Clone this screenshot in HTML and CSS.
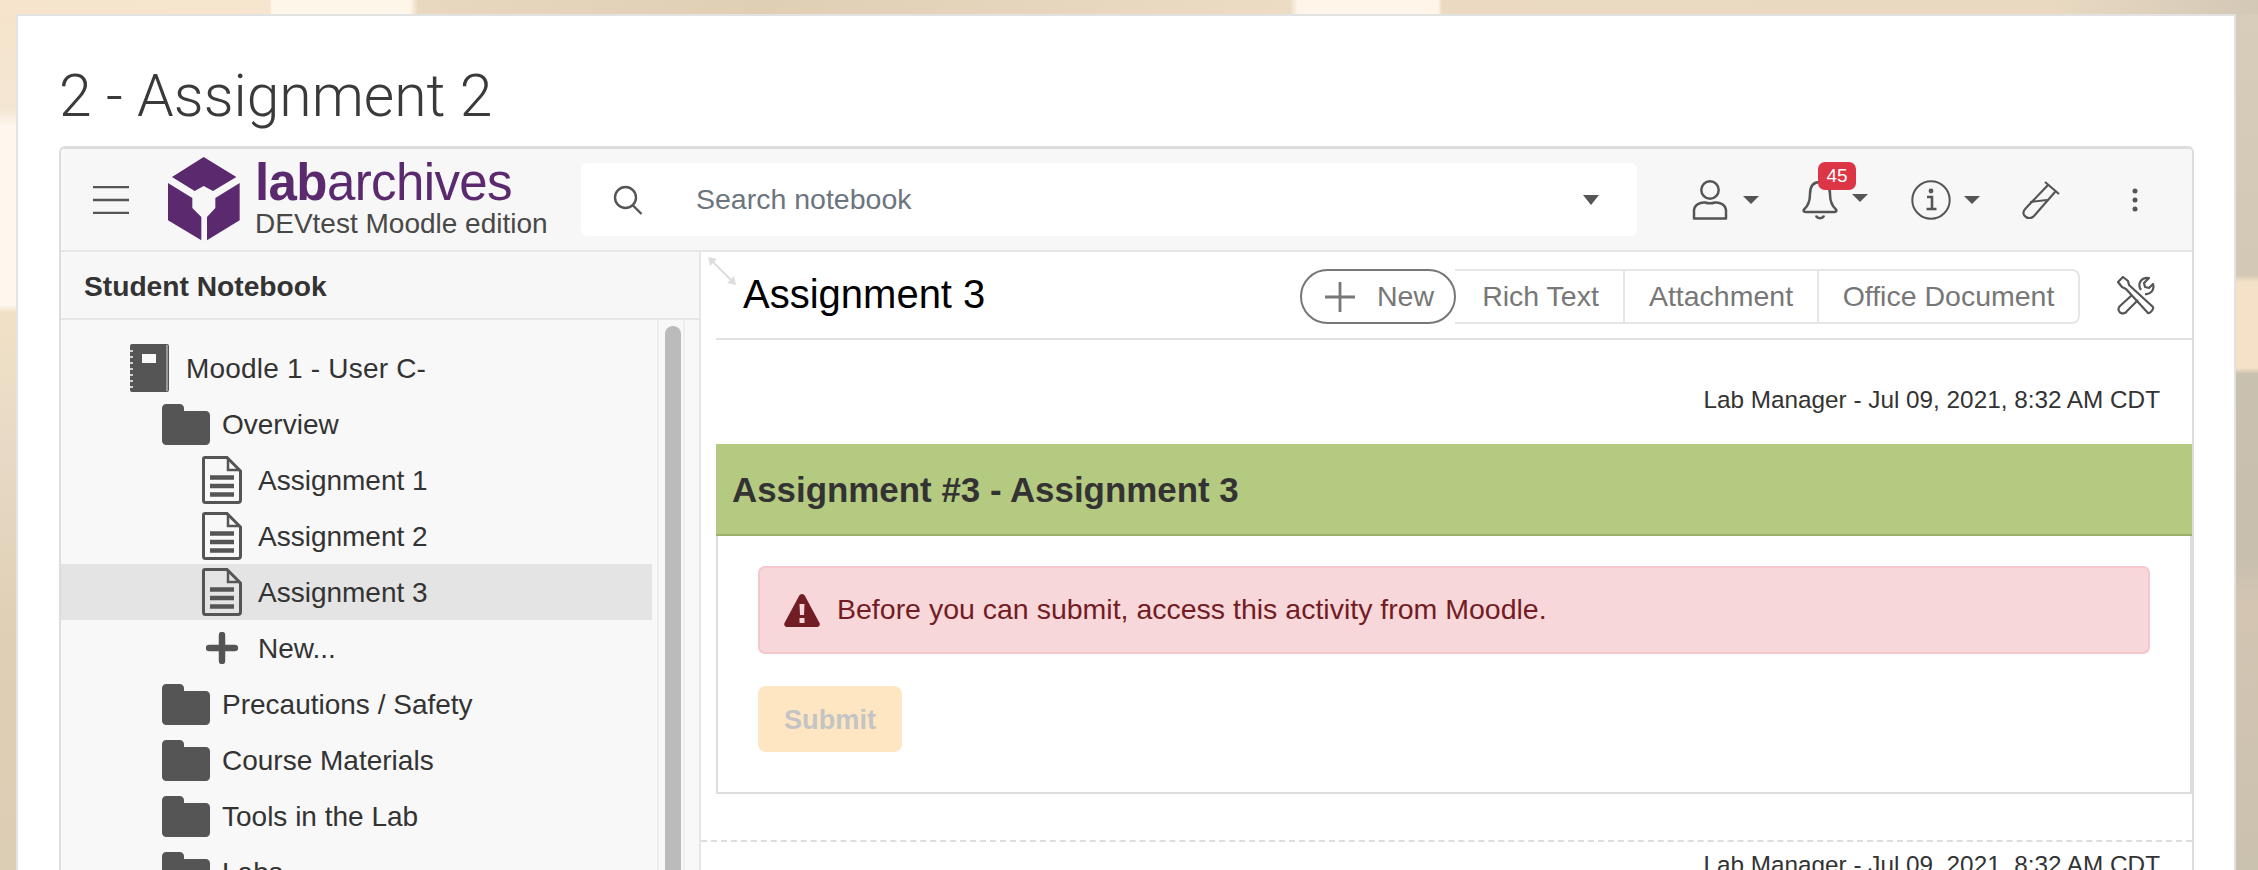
FILE: index.html
```html
<!DOCTYPE html>
<html lang="en">
<head>
<meta charset="utf-8">
<title>2 - Assignment 2</title>
<link rel="stylesheet" href="styles.css">
</head>
<body>
<div class="page">
  <div class="card">
    <h1 class="page-title">2 - Assignment 2</h1>
    <div class="app">
      <header class="topbar">
        <svg class="burger" width="36" height="28" viewBox="0 0 36 28"><path d="M0 1h36M0 14h36M0 27h36" stroke="#555" stroke-width="2.4" fill="none"/></svg>
        <svg class="cube" width="72" height="84" viewBox="55 25 216 252"><path fill="#5b2a6e" d="M162 25L260 85 190 127 162 112 135 127 67 85Z"/><path fill="#5b2a6e" d="M55 103L128 148V178L155 205V275L55 215Z"/><path fill="#5b2a6e" d="M270 103L197 148V178L172 205V275L270 215Z"/></svg>
        <div class="brand">
          <div class="brand-name"><b>lab</b>archives</div>
          <div class="brand-sub">DEVtest Moodle edition</div>
        </div>
        <div class="search">
          <svg class="search-icon" width="30" height="30" viewBox="0 0 30 30"><circle cx="12.5" cy="12.5" r="10.5" fill="none" stroke="#555" stroke-width="2.4"/><path d="M20 20.500L28.500 29" stroke="#555" stroke-width="2.4" fill="none"/></svg>
          <span class="search-text">Search notebook</span>
          <span class="caret caret-search"></span>
        </div>
        <div class="tools">
          <svg class="i-user" width="36" height="40" viewBox="0 0 36 40"><circle cx="18" cy="10" r="8.700" fill="none" stroke="#555" stroke-width="2.500"/><path d="M2 38.500V31C2 25 8 22 13 22.500C16 23.500 20 23.500 23 22.500C28 22 34 25 34 31V38.500Z" fill="none" stroke="#555" stroke-width="2.500" stroke-linejoin="round"/></svg>
          <span class="caret caret-user"></span>
          <div class="bell">
            <svg width="36" height="40" viewBox="0 0 36 40"><path d="M18 2C10 2 8 8 8 14C8 22 6 26 2 29.500C1 31 2 32 4 32H32C34 32 35 31 34 29.500C30 26 28 22 28 14C28 8 26 2 18 2Z" fill="none" stroke="#555" stroke-width="2.500" stroke-linejoin="round"/><path d="M14 35.500C15 39 21 39 22 35.500" fill="none" stroke="#555" stroke-width="2.500"/></svg>
            <span class="badge">45</span>
          </div>
          <span class="caret caret-bell"></span>
          <svg class="i-info" width="40" height="40" viewBox="0 0 40 40"><circle cx="20" cy="20" r="18.700" fill="none" stroke="#555" stroke-width="2"/><circle cx="20" cy="11" r="2.400" fill="#555"/><path d="M16 17H21V28.500M15.500 29H25.500" fill="none" stroke="#555" stroke-width="2.600"/></svg>
          <span class="caret caret-info"></span>
          <svg class="i-tube" width="38" height="38" viewBox="0 0 38 38"><path d="M23 1L37 13M26 4L4 27C0 31 1 34 4 36C7 38 10 37 12 35L33 11M8 21L25 19" fill="none" stroke="#555" stroke-width="2.200" stroke-linejoin="round"/></svg>
          <svg class="i-more" width="6" height="24" viewBox="0 0 6 24"><circle cx="3" cy="3" r="2.500" fill="#555"/><circle cx="3" cy="12" r="2.500" fill="#555"/><circle cx="3" cy="21" r="2.500" fill="#555"/></svg>
        </div>
      </header>
      <div class="workspace">
        <aside class="sidebar">
          <div class="side-head">Student Notebook</div>
          <div class="side-body">
            <ul class="tree">
              <li class="row lvl-book"><svg width="40" height="48" viewBox="0 0 40 48"><rect x="1" y="0" width="39" height="48" rx="2" fill="#555"/><path d="M38 1V47" stroke="#ddd" stroke-width="1"/><rect x="13" y="10" width="14" height="9" fill="#f8f8f8"/><path d="M0 7h4M0 13h4M0 19h4M0 25h4M0 31h4M0 37h4M0 43h4" stroke="#f8f8f8" stroke-width="1.500"/></svg><span>Moodle 1 - User C-</span></li>
              <li class="row lvl-folder"><svg class="folder" viewBox="0 0 48 41"><use href="#folder"/></svg><span>Overview</span></li>
              <li class="row lvl-page"><svg class="doc" viewBox="0 0 40 48"><use href="#doc"/></svg><span>Assignment 1</span></li>
              <li class="row lvl-page"><svg class="doc" viewBox="0 0 40 48"><use href="#doc"/></svg><span>Assignment 2</span></li>
              <li class="row lvl-page selected"><svg class="doc" viewBox="0 0 40 48"><use href="#doc"/></svg><span>Assignment 3</span></li>
              <li class="row lvl-new"><svg width="32" height="32" viewBox="0 0 32 32"><path d="M16 3V29M3 16H29" stroke="#555" stroke-width="6.500" stroke-linecap="round"/></svg><span>New...</span></li>
              <li class="row lvl-folder"><svg class="folder" viewBox="0 0 48 41"><use href="#folder"/></svg><span>Precautions / Safety</span></li>
              <li class="row lvl-folder"><svg class="folder" viewBox="0 0 48 41"><use href="#folder"/></svg><span>Course Materials</span></li>
              <li class="row lvl-folder"><svg class="folder" viewBox="0 0 48 41"><use href="#folder"/></svg><span>Tools in the Lab</span></li>
              <li class="row lvl-folder"><svg class="folder" viewBox="0 0 48 41"><use href="#folder"/></svg><span>Labs</span></li>
            </ul>
            <div class="track"><div class="thumb"></div></div>
          </div>
        </aside>
        <main class="main">
          <svg class="resize" width="28" height="28" viewBox="0 0 28 28"><path d="M3 3L25 25" stroke="#ddd" stroke-width="2"/><path d="M0 0L9 2 2 9ZM28 28L19 26 26 19Z" fill="#ddd"/></svg>
          <div class="toolbar">
            <h2 class="entry-title">Assignment 3</h2>
            <div class="btn-group">
              <div class="btn-new"><svg width="30" height="30" viewBox="0 0 30 30"><path d="M15 0V30M0 15H30" stroke="#777" stroke-width="2.800"/></svg><span>New</span></div>
              <div class="btn-list">
                <div class="btn btn-rich">Rich Text</div>
                <div class="btn btn-att">Attachment</div>
                <div class="btn btn-office">Office Document</div>
              </div>
            </div>
            <svg class="i-wrench" width="38" height="39" viewBox="0 0 38 39"><g fill="none" stroke="#555" stroke-width="2.200" stroke-linejoin="round"><path d="M1 6L6 1 11 5 12 9 36 31C37 33 33 38 31 37L9 13 5 11Z"/><path d="M15 19L3 30C0 33 2 36 4 37C6 38 9 37 10 35L21 24"/><path d="M24 14C20 8 24 1 32 2L27 7 28 11 32 12 36 8C38 14 33 19 28 18"/></g></svg>
          </div>
          <section class="entry">
            <p class="meta">Lab Manager - Jul 09, 2021, 8:32 AM CDT</p>
            <h3 class="banner">Assignment #3 - Assignment 3</h3>
            <div class="panel">
              <div class="alert">
                <svg width="36" height="33" viewBox="0 0 36 33"><path fill="#721c24" fill-rule="evenodd" d="M18 0C19.500 0 20.500 1 21 2L35.500 29C36.500 31 35 33 33 33H3C1 33 -.500 31 .500 29L15 2C15.500 1 16.500 0 18 0ZM15.500 10L16 21H20L20.500 10ZM15.500 24V29H20.500V24Z"/></svg>
                <span>Before you can submit, access this activity from Moodle.</span>
              </div>
              <button class="submit" type="button">Submit</button>
            </div>
          </section>
          <section class="entry-next">
            <p class="meta">Lab Manager - Jul 09, 2021, 8:32 AM CDT</p>
          </section>
        </main>
      </div>
    </div>
  </div>
</div>
<svg class="defs" width="0" height="0">
  <symbol id="folder" viewBox="0 0 48 41"><path fill="#555" d="M4 0H18C20 0 22 2 22 4V7H44C46 7 48 9 48 11V37C48 39 46 41 44 41H4C2 41 0 39 0 37V4C0 2 2 0 4 0Z"/></symbol>
  <symbol id="doc" viewBox="0 0 40 48"><path d="M3 1.500H25L38.500 15V44C38.500 45.500 37.500 46.500 36 46.500H3C2 46.500 1.500 45.500 1.500 44V3C1.500 2 2 1.500 3 1.500Z" fill="none" stroke="#555" stroke-width="3"/><path d="M26 2V14H38" fill="none" stroke="#555" stroke-width="2.500"/><path d="M8 21.500H32M8 30H32M8 38.500H32" stroke="#555" stroke-width="4.500"/></symbol>
</svg>
</body>
</html>
```

FILE: styles.css
```css
* { box-sizing: border-box; }
html, body { margin: 0; padding: 0; height: 870px; overflow: hidden; }
body {
  font-family: "Liberation Sans", Arial, sans-serif;
  color: #333;
  background-color: #e6d5bb;
  background-image:
    linear-gradient(90deg, #f6e5cc 0, #f7e6cf 270px, #fff6ea 272px, #fff6ea 410px, #e8d8bf 418px, #dfcfb5 760px, #ecdcc4 1290px, #fff6e9 1298px, #fff6e9 1438px, #ebdac1 1442px, #e9d9c1 2050px, #d3c8b6 2258px),
    linear-gradient(180deg, #f6e4ca 0, #f3e6d3 110px, #fff8ef 126px, #fff8ef 305px, #f0e1c6 312px, #e8d9c6 450px, #dfcfb4 640px, #dccdb5 870px),
    linear-gradient(180deg, #d8ccba 0, #d3c8b6 275px, #f4e1c8 282px, #f4e1c8 368px, #c9c1b0 374px, #c8bfae 560px, #d3c5b2 600px, #cbc1af 870px);
  background-size: 100% 14px, 16px 100%, 22px 100%;
  background-position: 0 0, 0 0, 100% 0;
  background-repeat: no-repeat;
}
.defs { position: absolute; }
.page { padding: 14px 22px 0 16px; }
.card {
  background: #fff;
  border: 2px solid #e2e2e2;
  border-bottom: 0;
  padding: 0 40px 0 41px;
  height: 860px;
  overflow: hidden;
}
.page-title {
  margin: 0;
  height: 130px;
  padding-top: 42px;
  font-family: Roboto, sans-serif;
  font-weight: 300;
  font-size: 58.8px;
  line-height: 76px;
  color: #3a3a3a;
}
.app {
  border: 2px solid #ddd;
  border-top-width: 3px;
  border-radius: 6px 6px 0 0;
  height: 730px;
  overflow: hidden;
}
.topbar {
  display: flex;
  align-items: center;
  height: 103px;
  padding-left: 32px;
  background: #f7f7f7;
  border-bottom: 2px solid #e6e6e6;
}
.burger { flex: none; }
.cube { flex: none; margin-left: 39px; margin-top: -1px; }
.brand { flex: none; width: 326px; margin-left: 15px; color: #5b2a6e; }
.brand-name { font-size: 51px; line-height: 50px; letter-spacing: -.6px; margin-top: -2px; }
.brand-sub { font-size: 28px; line-height: 31px; color: #484848; }
.search {
  flex: none;
  display: flex;
  align-items: center;
  width: 1056px;
  height: 73px;
  padding-left: 32px;
  background: #fff;
  border-radius: 6px;
}
.search-text { margin-left: 53px; font-size: 28.5px; color: #6c757d; flex: 1; }
.caret {
  width: 0;
  height: 0;
  border-left: 8px solid transparent;
  border-right: 8px solid transparent;
  border-top: 8px solid #555;
  flex: none;
}
.caret-search { margin-right: 38px; border-top-width: 10px; }
.tools { flex: 1; display: flex; align-items: center; margin-left: 55px; height: 60px; }
.caret-user { margin-left: 15px; }
.bell { position: relative; margin-left: 43px; height: 40px; }
.badge {
  position: absolute;
  left: 16px;
  top: -18px;
  width: 38px;
  height: 28px;
  border-radius: 7px;
  background: #dc3545;
  color: #fff;
  font-size: 19px;
  line-height: 28px;
  text-align: center;
}
.caret-bell { margin-left: 14px; margin-top: -4px; }
.i-info { margin-left: 43px; }
.caret-info { margin-left: 13px; }
.i-tube { margin-left: 42px; }
.i-more { margin-left: 72px; }
.workspace { display: flex; height: 625px; }
.sidebar {
  flex: none;
  width: 640px;
  background: #f8f8f8;
  border-right: 2px solid #e6e6e6;
  display: flex;
  flex-direction: column;
}
.side-head {
  height: 68px;
  padding-left: 23px;
  border-bottom: 2px solid #e6e6e6;
  background: #f7f7f7;
  font-weight: 700;
  font-size: 28.2px;
  line-height: 68px;
}
.side-body { display: flex; flex: 1; min-height: 0; }
.tree { list-style: none; margin: 0; padding: 20px 0 0; width: 591px; flex: none; }
.row { display: flex; align-items: center; height: 56px; font-size: 28px; color: #333; }
.row span { position: relative; top: 1px; }
.row svg { flex: none; }
.folder { width: 48px; height: 41px; }
.doc { width: 40px; height: 48px; }
.lvl-book { padding-left: 68px; gap: 17px; letter-spacing: .2px; }
.lvl-folder { padding-left: 101px; gap: 12px; }
.lvl-page { padding-left: 141px; gap: 16px; }
.lvl-new { padding-left: 145px; gap: 20px; }
.selected { background: #e4e4e4; }
.track {
  flex: none;
  width: 28px;
  margin-left: 5px;
  padding: 6px 0 0 6px;
  border-left: 2px solid #eee;
  border-right: 2px solid #eee;
}
.thumb { width: 16px; height: 100%; background: #bbb; border-radius: 8px 8px 0 0; }
.main { flex: 1; min-width: 0; position: relative; background: #fff; }
.resize { position: absolute; left: 7px; top: 5px; }
.toolbar {
  display: flex;
  align-items: center;
  height: 88px;
  margin-left: 15px;
  padding-left: 27px;
  border-bottom: 2px solid #e2e2e2;
}
.entry-title { margin: 0; font-weight: 400; font-size: 40px; color: #000; flex: 1; margin-top: -1px; }
.btn-group {
  display: flex;
  height: 55px;
  margin-top: 3px;
  font-size: 28.5px;
  color: #777;
}
.btn-new {
  position: relative;
  display: flex;
  align-items: center;
  gap: 22px;
  flex: none;
  width: 156px;
  height: 55px;
  padding-left: 23px;
  border: 2px solid #777;
  border-radius: 28px;
  background: #fff;
}
.btn-list {
  display: flex;
  margin-left: -1px;
  border: 2px solid #e6e6e6;
  border-left: 0;
  border-radius: 0 8px 8px 0;
}
.btn { display: flex; align-items: center; justify-content: center; border-right: 2px solid #e6e6e6; }
.btn-rich { width: 170px; padding-left: 3px; }
.btn-att { width: 194px; }
.btn-office { width: 259px; border-right: 0; }
.i-wrench { margin-left: 37px; margin-right: 37px; flex: none; }
.entry { margin-left: 15px; }
.meta { margin: 0; font-size: 24.3px; line-height: 28px; color: #333; text-align: right; padding-right: 32px; }
.entry > .meta { padding-top: 46px; height: 104px; }
.banner {
  margin: 0;
  height: 92px;
  padding-left: 16px;
  background: #b5ca81;
  border-bottom: 2px solid #9bb06d;
  font-size: 34.9px;
  line-height: 92px;
  font-weight: 700;
  color: #333;
}
.panel {
  height: 258px;
  padding: 30px 40px 0 40px;
  border-left: 2px solid #ddd;
  border-right: 2px solid #ddd;
  border-bottom: 2px solid #ddd;
}
.alert {
  display: flex;
  align-items: center;
  gap: 17px;
  height: 88px;
  padding-left: 24px;
  background: #f8d7da;
  border: 2px solid #f5c6cb;
  border-radius: 7px;
  color: #721c24;
  font-size: 28.5px;
}
.alert span { position: relative; top: -1px; }
.submit {
  display: block;
  width: 144px;
  height: 66px;
  margin-top: 32px;
  padding: 2px 0 0;
  border: 0;
  border-radius: 8px;
  background: #ffe6c2;
  color: #c4c4c4;
  font-family: inherit;
  font-size: 27.2px;
  font-weight: 700;
}
.entry-next { margin-top: 46px; border-top: 2px dashed #ddd; padding-top: 9px; }
```
